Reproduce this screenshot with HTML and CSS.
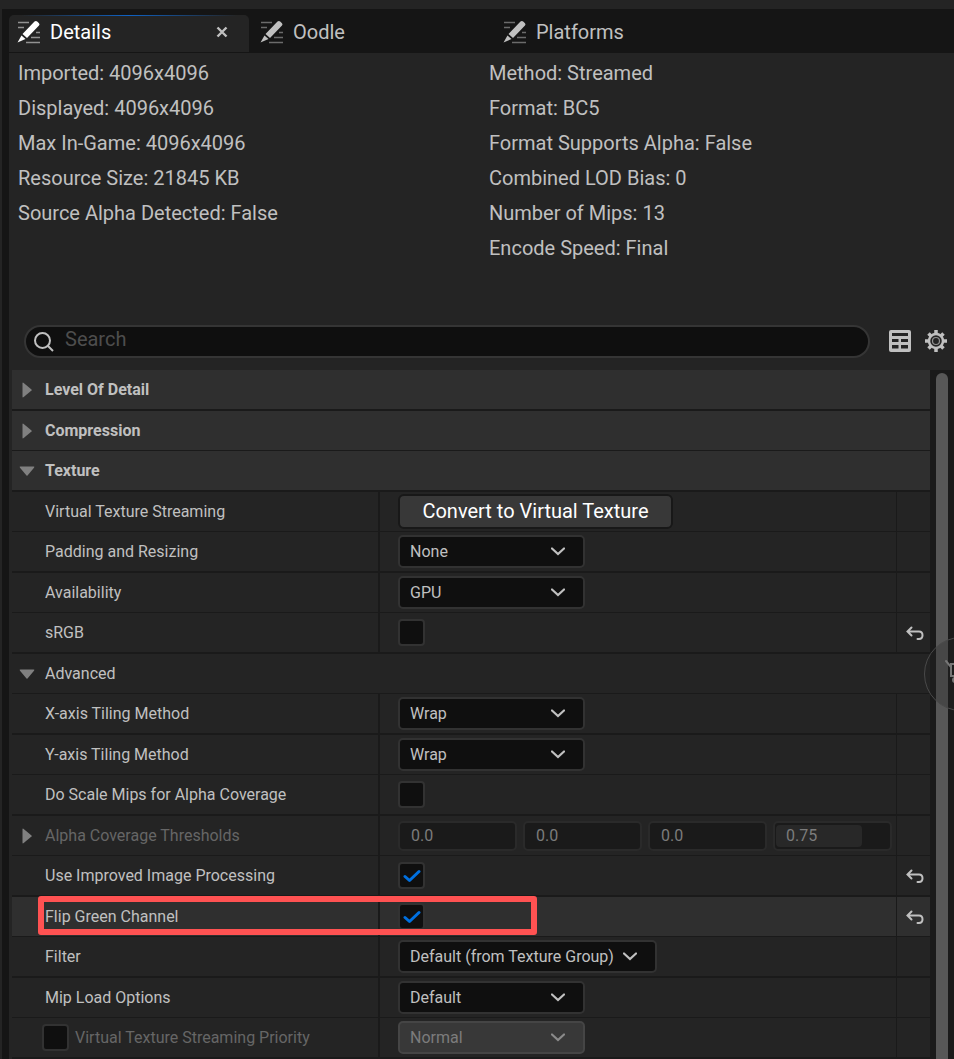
FILE: index.html
```html
<!DOCTYPE html>
<html lang="en">
<head>
    <meta charset="UTF-8">
    <meta name="viewport" content="width=device-width, initial-scale=1.0">
    <title>Texture Details</title>
    <link rel="stylesheet" href="styles.css">
</head>
<body>
    <!-- shared icons -->
    <svg class="sprite" aria-hidden="true">
        <symbol id="icon-edit" viewBox="0 0 24 24">
            <path d="M1 2.500H12M1 7.500H7M19 12.500H23M14 17.500H23M9 22.500H23" stroke="currentColor" stroke-width="1.500" opacity=".5"/>
            <path d="M17.500 1.500Q19 .5 20.500 1.800L22 3.200Q23 4.500 22 5.500L10 18 5.500 14z" fill="currentColor"/>
            <path d="M4.500 15.500 8.500 19 .5 22.500z" fill="currentColor"/>
        </symbol>
        <symbol id="icon-chevron" viewBox="0 0 14 9">
            <path d="M1 1.500 7 7 13 1.500" fill="none" stroke="currentColor" stroke-width="2.200" stroke-linecap="round"/>
        </symbol>
        <symbol id="icon-check" viewBox="0 0 18 14">
            <path d="M2 7.500 6.500 11.500 16 2.500" fill="none" stroke="currentColor" stroke-width="3" stroke-linecap="round" stroke-linejoin="round"/>
        </symbol>
        <symbol id="icon-reset" viewBox="0 0 18 15">
            <path d="M5.500 1.500 1.500 5.500 5.500 9.500M2 5.500H13Q16.500 5.500 16.500 9.200T13 13H11.500" fill="none" stroke="currentColor" stroke-width="2" stroke-linecap="round"/>
        </symbol>
        <symbol id="icon-right" viewBox="0 0 10 16">
            <path d="M.5 1.500Q.5 0 1.700 1L9.500 7.500Q10 8 9.500 8.500L1.700 15Q.5 16 .5 14.500z" fill="currentColor"/>
        </symbol>
        <symbol id="icon-down" viewBox="0 0 16 10">
            <path d="M1.500 .5Q0 .5 1 1.700L7.500 9.500Q8 10 8.500 9.500L15 1.700Q16 .5 14.500 .5z" fill="currentColor"/>
        </symbol>
    </svg>

    <div class="window">
        <nav class="tabs">
            <a class="tab active" href="#details">
                <svg class="tab-icon"><use href="#icon-edit"/></svg>
                <span>Details</span>
                <svg class="tab-close" viewBox="0 0 12 12"><path d="M1.500 1.500 10.500 10.500M10.500 1.500 1.500 10.500" stroke="currentColor" stroke-width="2.400"/></svg>
            </a>
            <a class="tab" href="#oodle">
                <svg class="tab-icon"><use href="#icon-edit"/></svg>
                <span>Oodle</span>
            </a>
            <a class="tab" href="#platforms">
                <svg class="tab-icon"><use href="#icon-edit"/></svg>
                <span>Platforms</span>
            </a>
        </nav>

        <main class="panel" id="details">
            <section class="info">
                <div>
                    <p>Imported: 4096x4096</p>
                    <p>Displayed: 4096x4096</p>
                    <p>Max In-Game: 4096x4096</p>
                    <p>Resource Size: 21845 KB</p>
                    <p>Source Alpha Detected: False</p>
                </div>
                <div>
                    <p>Method: Streamed</p>
                    <p>Format: BC5</p>
                    <p>Format Supports Alpha: False</p>
                    <p>Combined LOD Bias: 0</p>
                    <p>Number of Mips: 13</p>
                    <p>Encode Speed: Final</p>
                </div>
            </section>

            <div class="toolbar">
                <label class="search">
                    <svg viewBox="0 0 20 20"><circle cx="8.500" cy="8.500" r="7.500"/><path d="M14 14 19 19"/></svg>
                    <input type="text" placeholder="Search" aria-label="Search">
                </label>
                <button class="tool" aria-label="Property matrix">
                    <svg viewBox="0 0 22 22"><path fill="currentColor" fill-rule="evenodd" d="M2 0H20Q22 0 22 2V20Q22 22 20 22H2Q0 22 0 20V2Q0 0 2 0zM3 3V6H19V3zM3 9V12H9.500V9zM12 9V12H19V9zM3 15V18.500H9.500V15zM12 15V18.500H19V15z"/></svg>
                </button>
                <button class="tool" aria-label="Settings">
                    <svg viewBox="0 0 22 22" fill="none" stroke="currentColor">
                        <circle cx="11" cy="11" r="7" stroke-width="2.500"/>
                        <circle cx="11" cy="11" r="3.500" stroke-width="1.200" opacity=".7"/>
                        <path stroke-width="3.500" d="M11 0V4M11 18V22M0 11H4M18 11H22M3.500 3.500 6 6M16 16 18.500 18.500M3.500 18.500 6 16M16 6 18.500 3.500"/>
                    </svg>
                </button>
            </div>

            <div class="scroll">
                <div class="rows">
                    <div class="row category">
                        <button class="toggle"><svg class="right"><use href="#icon-right"/></svg>Level Of Detail</button>
                    </div>
                    <div class="row category">
                        <button class="toggle"><svg class="right"><use href="#icon-right"/></svg>Compression</button>
                    </div>
                    <div class="row category">
                        <button class="toggle"><svg class="down"><use href="#icon-down"/></svg>Texture</button>
                    </div>
                    <div class="row">
                        <div class="name">Virtual Texture Streaming</div>
                        <div class="value"><button class="convert">Convert to Virtual Texture</button></div>
                        <div class="reset"></div>
                    </div>
                    <div class="row">
                        <label class="name" for="padding">Padding and Resizing</label>
                        <div class="value">
                            <div class="combo"><select id="padding"><option>None</option></select><svg><use href="#icon-chevron"/></svg></div>
                        </div>
                        <div class="reset"></div>
                    </div>
                    <div class="row">
                        <label class="name" for="availability">Availability</label>
                        <div class="value">
                            <div class="combo"><select id="availability"><option>GPU</option></select><svg><use href="#icon-chevron"/></svg></div>
                        </div>
                        <div class="reset"></div>
                    </div>
                    <div class="row">
                        <label class="name" for="srgb">sRGB</label>
                        <div class="value"><div class="check"><input type="checkbox" id="srgb"><svg><use href="#icon-check"/></svg></div></div>
                        <div class="reset"><button aria-label="Reset to default"><svg><use href="#icon-reset"/></svg></button></div>
                    </div>
                    <div class="row">
                        <button class="toggle"><svg class="down"><use href="#icon-down"/></svg>Advanced</button>
                    </div>
                    <div class="row">
                        <label class="name" for="tile-x">X-axis Tiling Method</label>
                        <div class="value">
                            <div class="combo"><select id="tile-x"><option>Wrap</option></select><svg><use href="#icon-chevron"/></svg></div>
                        </div>
                        <div class="reset"></div>
                    </div>
                    <div class="row">
                        <label class="name" for="tile-y">Y-axis Tiling Method</label>
                        <div class="value">
                            <div class="combo"><select id="tile-y"><option>Wrap</option></select><svg><use href="#icon-chevron"/></svg></div>
                        </div>
                        <div class="reset"></div>
                    </div>
                    <div class="row">
                        <label class="name" for="scale-mips">Do Scale Mips for Alpha Coverage</label>
                        <div class="value"><div class="check"><input type="checkbox" id="scale-mips"><svg><use href="#icon-check"/></svg></div></div>
                        <div class="reset"></div>
                    </div>
                    <div class="row">
                        <button class="toggle name disabled"><svg class="right"><use href="#icon-right"/></svg>Alpha Coverage Thresholds</button>
                        <div class="value numbers">
                            <div class="number"><input type="text" value="0.0" aria-label="Threshold X" disabled></div>
                            <div class="number"><input type="text" value="0.0" aria-label="Threshold Y" disabled></div>
                            <div class="number"><input type="text" value="0.0" aria-label="Threshold Z" disabled></div>
                            <div class="number"><span class="fill" style="width: 75%"></span><input type="text" value="0.75" aria-label="Threshold W" disabled></div>
                        </div>
                        <div class="reset"></div>
                    </div>
                    <div class="row">
                        <label class="name" for="improved">Use Improved Image Processing</label>
                        <div class="value"><div class="check"><input type="checkbox" id="improved" checked><svg><use href="#icon-check"/></svg></div></div>
                        <div class="reset"><button aria-label="Reset to default"><svg><use href="#icon-reset"/></svg></button></div>
                    </div>
                    <div class="row hovered">
                        <label class="name" for="flip">Flip Green Channel</label>
                        <div class="value"><div class="check"><input type="checkbox" id="flip" checked><svg><use href="#icon-check"/></svg></div></div>
                        <div class="reset"><button aria-label="Reset to default"><svg><use href="#icon-reset"/></svg></button></div>
                        <div class="marker"></div>
                    </div>
                    <div class="row">
                        <label class="name" for="filter">Filter</label>
                        <div class="value">
                            <div class="combo wide"><select id="filter"><option>Default (from Texture Group)</option></select><svg><use href="#icon-chevron"/></svg></div>
                        </div>
                        <div class="reset"></div>
                    </div>
                    <div class="row">
                        <label class="name" for="mip-load">Mip Load Options</label>
                        <div class="value">
                            <div class="combo"><select id="mip-load"><option>Default</option></select><svg><use href="#icon-chevron"/></svg></div>
                        </div>
                        <div class="reset"></div>
                    </div>
                    <div class="row">
                        <div class="name optional disabled">
                            <div class="check"><input type="checkbox" id="use-priority"><svg><use href="#icon-check"/></svg></div>
                            <label for="use-priority">Virtual Texture Streaming Priority</label>
                        </div>
                        <div class="value">
                            <div class="combo"><select aria-label="Virtual Texture Streaming Priority" disabled><option>Normal</option></select><svg><use href="#icon-chevron"/></svg></div>
                        </div>
                        <div class="reset"></div>
                    </div>
                </div>
                <div class="scrollbar"><div class="thumb"></div></div>
            </div>
        </main>
    </div>

    <button class="floating" aria-label="Open cart">
        <svg viewBox="0 0 32 32" fill="none" stroke="currentColor" stroke-width="2">
            <path d="M1 3 6 9V18H26V6H6V9" stroke-linecap="round"/>
            <circle cx="10" cy="22" r="2" fill="currentColor"/>
        </svg>
    </button>
</body>
</html>
```

FILE: styles.css
```css
* {
    box-sizing: border-box;
}

body {
    margin: 0;
    background: #151515;
    border-top: 9px solid #242424;
    border-left: 2px solid #242424;
    color: #c0c0c0;
    font-family: Roboto, sans-serif;
    font-size: 16px;
    overflow: hidden;
}

button, input, select {
    margin: 0;
    font: inherit;
    color: inherit;
}

button {
    padding: 0;
    border: none;
    background: none;
}

p {
    margin: 0;
}

.sprite {
    display: none;
}

.window {
    padding: 6px 0 0 7px;
}

/* tabs */
.tabs {
    display: flex;
    gap: 3px;
    height: 37px;
    margin-bottom: 1px;
}

.tab {
    display: flex;
    align-items: center;
    width: 240px;
    padding: 0 21px 4px 8px;
    border-top: 1px solid transparent;
    border-radius: 5px 5px 0 0;
    color: #c0c0c0;
    font-size: 20px;
    text-decoration: none;
}

.tab.active {
    background: linear-gradient(90deg, #242424 5%, #0f62c4 50%, #242424 95%) top / 100% 1px no-repeat border-box, #242424;
    color: #fff;
}

.tab-icon {
    width: 24px;
    height: 24px;
    margin-right: 9px;
}

.tab-close {
    width: 12px;
    height: 12px;
    margin-left: auto;
    color: #c0c0c0;
}

.panel {
    background: #242424;
}

/* texture info */
.info {
    display: grid;
    grid-template-columns: 1fr 1fr;
    gap: 6px;
    padding: 3px 0 59px 9px;
    font-size: 20px;
    line-height: 35px;
}

.toolbar {
    display: flex;
    align-items: center;
    gap: 14px;
    padding: 0 7px 12px 15px;
}

.search {
    display: flex;
    align-items: center;
    flex: 1;
    height: 33px;
    margin-right: 5px;
    padding: 0 8px;
    border: 2px solid #353535;
    border-radius: 17px;
    background: #0f0f0f;
}

.search svg {
    width: 20px;
    height: 20px;
    margin-right: 11px;
    fill: none;
    stroke: #c0c0c0;
    stroke-width: 2;
}

.search input {
    flex: 1;
    min-width: 0;
    padding: 0 0 6px;
    border: none;
    outline: none;
    background: none;
    font-size: 20px;
}

.search input::placeholder {
    color: #4d4d4d;
}

.tool {
    padding-bottom: 2px;
}

.tool svg {
    display: block;
    width: 22px;
    height: 22px;
}

/* property rows */
.scroll {
    display: flex;
    padding-left: 3px;
}

.rows {
    flex: 1;
}

.row {
    position: relative;
    display: flex;
    height: 40px;
    border-bottom: 1px solid #1a1a1a;
}

.row:nth-child(odd) {
    height: 41px;
    border-bottom-width: 2px;
}

.row.category, .row.hovered {
    background: #2f2f2f;
}

.category {
    font-weight: bold;
}

.name {
    display: flex;
    align-items: center;
    width: 368px;
    padding-left: 33px;
    border-right: 2px solid #1a1a1a;
}

.toggle {
    display: flex;
    align-items: center;
    padding-left: 7px;
}

.toggle svg {
    color: #808080;
}

.toggle .right {
    width: 10px;
    height: 16px;
    margin: 0 13px 0 3px;
}

.toggle .down {
    width: 16px;
    height: 10px;
    margin-right: 10px;
}

.disabled {
    color: #666;
}

.optional {
    gap: 6px;
    padding-left: 30px;
}

.value {
    display: flex;
    align-items: center;
    flex: 1;
    padding: 0 4px 0 18px;
}

.reset {
    display: flex;
    align-items: center;
    justify-content: center;
    width: 34px;
    padding: 2px 0 0 2px;
    border-left: 1px solid #1a1a1a;
}

.reset svg {
    display: block;
    width: 18px;
    height: 15px;
}

/* controls */
.convert {
    width: 275px;
    height: 35px;
    padding-bottom: 2px;
    border: 2px solid #181818;
    border-radius: 6px;
    background: #383838;
    color: #fff;
    font-size: 20px;
}

.combo, .check, .number {
    display: grid;
    align-items: center;
}

.combo > *, .check > *, .number > * {
    grid-area: 1 / 1;
}

.combo {
    width: 187px;
}

.combo.wide {
    width: 259px;
}

.combo select {
    appearance: none;
    height: 33px;
    padding: 0 10px;
    border: 2px solid #323232;
    border-radius: 5px;
    background: #0f0f0f;
}

.combo select:disabled {
    border-color: #454545;
    background: #383838;
    color: #7c7c7c;
    opacity: 1;
}

.combo svg {
    width: 14px;
    height: 9px;
    margin-right: 20px;
    justify-self: end;
    pointer-events: none;
}

.combo select:disabled + svg {
    color: #8a8a8a;
}

.check {
    justify-items: center;
}

.check input {
    appearance: none;
    width: 27px;
    height: 27px;
    border: 2px solid #323232;
    border-radius: 4px;
    background: #0f0f0f;
}

.check svg {
    width: 18px;
    height: 14px;
    color: #0070e0;
    visibility: hidden;
    pointer-events: none;
}

.check input:checked + svg {
    visibility: visible;
}

.numbers {
    gap: 6px;
}

.number {
    flex: 1;
    height: 30px;
    border: 2px solid #2a2a2a;
    border-radius: 5px;
    background: #1a1a1a;
}

.number input {
    width: 100%;
    min-width: 0;
    padding: 0 11px;
    border: none;
    background: none;
    color: #7c7c7c;
}

.fill {
    height: 22px;
    margin-left: 1px;
    border-radius: 4px;
    background: #282828;
}

.marker {
    position: absolute;
    top: -1px;
    left: 26px;
    width: 499px;
    height: 39px;
    border: 6px solid #ff5252;
    border-radius: 3px;
    pointer-events: none;
}

.scrollbar {
    width: 24px;
    padding: 3px 6px 0;
    background: #1a1a1a;
}

.thumb {
    height: 100%;
    border-radius: 6px 6px 0 0;
    background: #575757;
}

.floating {
    position: fixed;
    top: 637px;
    right: -44px;
    width: 74px;
    height: 74px;
    padding-left: 20px;
    border: 1px solid #4a4a4a;
    border-radius: 50%;
    background: rgba(36, 36, 36, 0.3);
    color: #777;
}

.floating svg {
    display: block;
    width: 32px;
    height: 32px;
}
```
